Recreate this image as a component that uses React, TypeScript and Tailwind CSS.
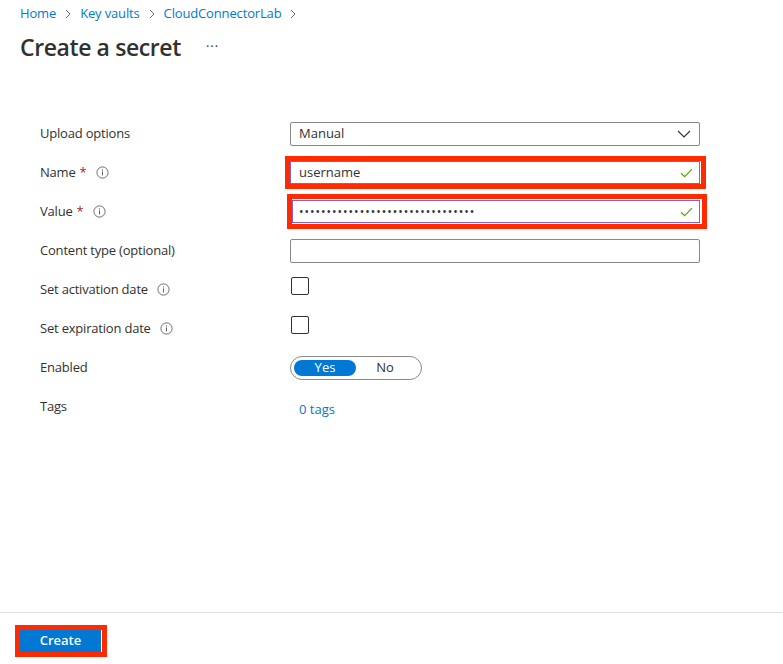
import React from "react";

const Info = () => (
  <svg width="13" height="13" viewBox="0 0 13 13" className="shrink-0">
    <circle cx="6.5" cy="6.5" r="5.6" fill="none" stroke="#605e5c" strokeWidth="0.9" />
    <rect x="6" y="5.4" width="1" height="4" fill="#605e5c" />
    <rect x="6" y="3.4" width="1" height="1.1" fill="#605e5c" />
  </svg>
);

const Check = () => (
  <svg width="13" height="10" viewBox="0 0 13 10">
    <path d="M1 5.2 L4.6 8.6 L12 1.2" fill="none" stroke="#57a300" strokeWidth="1.2" />
  </svg>
);

const Chev = () => (
  <svg width="6" height="10" viewBox="0 0 6 10" className="mx-[3px]">
    <path d="M1 1 L5 5 L1 9" fill="none" stroke="#605e5c" strokeWidth="0.9" />
  </svg>
);

const Row = ({ label, children, info, req }: { label: string; children?: React.ReactNode; info?: boolean; req?: boolean }) => (
  <div className="flex h-[39px] items-center">
    <div className="w-[250px] flex items-center text-[13px] text-[#323130] tracking-[-0.2px]">
      <span>{label}</span>
      {req && <span className="text-[#a4262c] ml-[4px]">*</span>}
      {info && <span className="ml-[9px] flex items-center"><Info /></span>}
    </div>
    <div className="flex-1">{children}</div>
  </div>
);

export default function App() {
  return (
    <div
      className="w-[783px] h-[664px] bg-white flex flex-col overflow-hidden"
      style={{ fontFamily: '"Open Sans", "Noto Sans", sans-serif' }}
    >
      <div className="px-5 pt-[5px]">
        <div className="flex items-center text-[13px] text-[#0078d4] h-[18px] gap-[6px] tracking-[-0.15px]">
          <span>Home</span>
          <Chev />
          <span>Key vaults</span>
          <Chev />
          <span>CloudConnectorLab</span>
          <Chev />
        </div>
        <div className="flex items-center mt-[9px] h-[30px]">
          <h1 className="text-[23px] font-semibold text-[#323130] tracking-[-0.4px]">Create a secret</h1>
          <span className="ml-[25px] text-[13px] text-[#323130] tracking-[1px] -mt-[1px]">···</span>
        </div>
      </div>

      <div className="pl-10 pr-[83px] mt-[52px]">
        <Row label="Upload options">
          <div className="h-[24px] border border-[#8a8886] rounded-[2px] flex items-center justify-between pl-[8px] pr-[8px] text-[13px] text-[#323130]">
            <span>Manual</span>
            <svg width="14" height="8" viewBox="0 0 14 8">
              <path d="M1 1 L7 7 L13 1" fill="none" stroke="#323130" strokeWidth="1.1" />
            </svg>
          </div>
        </Row>
        <Row label="Name" req info>
          <div className="relative">
            <div className="absolute -left-[5px] -right-[6px] -top-[5px] -bottom-[5px] border-[5px] border-[#ff2a00]" />
            <div className="relative h-[23px] border border-[#8a5fc8] bg-white flex items-center justify-between pl-[8px] pr-[6px] text-[13px] text-[#323130]">
              <span>username</span>
              <Check />
            </div>
          </div>
        </Row>
        <Row label="Value" req info>
          <div className="relative">
            <div className="absolute -left-[3px] -right-[7px] -top-[6px] -bottom-[6px] border-[5px] border-[#ff2a00]" />
            <div className="relative ml-[2px] h-[23px] border border-[#8a5fc8] bg-white flex items-center justify-between pl-[6px] pr-[6px] text-[13px] text-[#323130]">
              <span className="tracking-[1px] text-[12px]">••••••••••••••••••••••••••••••••</span>
              <Check />
            </div>
          </div>
        </Row>
        <Row label="Content type (optional)">
          <div className="h-[24px] border border-[#8a8886] rounded-[2px]" />
        </Row>
        <Row label="Set activation date" info>
          <div className="w-[18px] h-[18px] border border-[#323130] rounded-[2px] ml-[1px] mb-[8px]" />
        </Row>
        <Row label="Set expiration date" info>
          <div className="w-[18px] h-[18px] border border-[#323130] rounded-[2px] ml-[1px] mb-[8px]" />
        </Row>
        <Row label="Enabled">
          <div className="w-[132px] h-[24px] border border-[#8a8886] rounded-full flex items-center px-[3px] text-[13px]">
            <div className="w-[62px] h-[16px] rounded-full bg-[#0078d4] text-white flex items-center justify-center">Yes</div>
            <div className="flex-1 flex items-center justify-center text-[#323130] pr-[4px]">No</div>
          </div>
        </Row>
        <Row label="Tags">
          <div className="text-[13px] text-[#0078d4] pl-[9px] pt-[6px]">0 tags</div>
        </Row>
      </div>

      <div className="flex-1" />
      <div className="border-t border-[#e1dfdd] h-[52px] pl-[20px] pt-[17px]">
        <div className="relative w-[81px]">
          <div className="absolute -left-[5px] -right-[6px] -top-[5px] -bottom-[5px] border-[5px] border-[#ff2a00]" />
          <div className="relative h-[22px] bg-[#0078d4] text-white text-[13px] font-semibold flex items-center justify-center">Create</div>
        </div>
      </div>
    </div>
  );
}
